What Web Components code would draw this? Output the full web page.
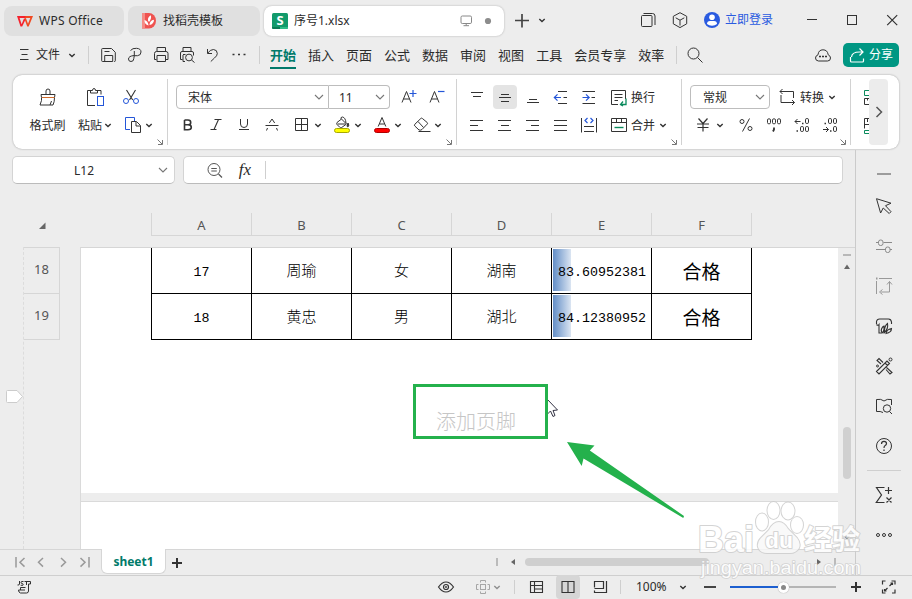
<!DOCTYPE html>
<html lang="zh-CN">
<head>
<meta charset="utf-8">
<title>序号1.xlsx - WPS Office</title>
<style>
  html, body {
    margin: 0;
    width: 912px;
    height: 599px;
    overflow: hidden;
    background: #ededed;
  }
  body {
    font: 12px/18px "Noto Sans", "Noto Sans CJK SC", sans-serif;
    color: #2b2b2b;
    --line: #d2d2d2;
    --accent: #007a6a;
    --cjk: "Noto Sans CJK SC", sans-serif;
  }
</style>
</head>
<body>
<wps-app></wps-app>

<script>
// 20x20 line icons, 1px = 1 unit
const ICONS = {
  chevron: '<path d="M7.300 9l2.700 2.500L12.700 9" stroke-width="1.400"/>',
  chevronWide: '<path d="M6 8l4 4 4-4" stroke="#777" stroke-width="1.1"/>',
  launcher: '<path d="M7.5 7.5l4.500 4.500M12.500 8v4.500H8" stroke="#777"/>',
  wps: '<path d="M2 5h9v2H4.6l2 6.3L9 7.5h2L7.2 15.6H5.5z" fill="#f5222d" stroke="none"/><path d="M10.500 5H18l-4.300 10.600h-1.500L9.700 8.600l1-2 2.300 6.200L15.300 7H10z" fill="#f04a22" stroke="none"/>',
  daoke: '<path d="M3 2h7a7 7.700 0 0 1 0 15.400H3z" fill="#ef5350" stroke="none"/><path d="M3 2h3v15.400H3z" fill="#f58b84" stroke="none"/><path d="M9.600 14.500C5.800 13.500 5.500 11 5.500 9c2.300.5 3.800 2.500 4.100 5.500zM9 9.500C8.700 7 9.800 5.500 11.800 4.200c.7 2.300.2 4.200-1.800 6.800zM10.500 14c0-3 1.500-4.800 4.500-5.200 0 3-1.700 4.900-4.500 5.200z" fill="#fff" stroke="none"/>',
  sheetLogo: '<rect x="2" y="2" width="16" height="16" rx="1.500" fill="#129a6b" stroke="none"/><path d="M2 16h8v2H3.500Q2 18 2 16.500z" fill="#0a7b55" stroke="none"/><path d="M10 16h8v.5q0 1.500-1.500 1.500H10z" fill="#2fbd86" stroke="none"/>',
  monitor: '<rect x="5" y="5" width="10.500" height="7.500" rx="1.300" stroke="#888"/><path d="M10.200 12.500v2M7.500 14.700h5.500" stroke="#888"/>',
  dot: '<circle cx="10" cy="10" r="3.100" fill="#8c8c8c" stroke="none"/>',
  plusBig: '<path d="M3 10.500h14M10 4v13.500" stroke-width="1.700" stroke="#444"/>',
  windows: '<rect x="3.500" y="5.500" width="10.500" height="11" rx="1"/><path d="M5.500 3.500h9q2.500 0 2.500 2.500v9"/>',
  cube: '<path d="M10 2.700l6.700 3.600v7.500L10 17.600l-6.700-3.800V6.300zM5.700 7.800L10 10.200l4.300-2.400M10 10.200v5.300"/>',
  avatar: '<circle cx="10" cy="10" r="8" fill="#2a5be0" stroke="none"/><circle cx="10" cy="7.300" r="2.800" fill="#fff" stroke="none"/><path d="M5 14q0-3 3-3h4q3 0 3 3-2 1.800-5 1.800T5 14z" fill="#fff" stroke="none"/>',
  winMin: '<path d="M5 9.500h10"/>',
  winMax: '<rect x="5.500" y="5.500" width="9" height="9"/>',
  winClose: '<path d="M5.200 5.200l10 10M15.200 5.200l-10 10" stroke-width="1.200"/>',
  burger: '<path d="M6 4.500h8.500M7.500 9.500h6M6 14.500h8.500"/>',
  save: '<path d="M6 16.500H3.500q-.8 0-.8-.8V4.300q0-.8.8-.8h9l3.800 3.800v8.400q0 .8-.8.8H15M5.700 16.500v-6h8v6zM5.500 6.500h5"/>',
  brush: '<path d="M5.500 5.500q2-2.500 6-2.200 4.500.3 4.500 3.700t-3.500 3.700h-3.500M9.300 6v4.500M9.300 10.500Q3.500 11 3.500 14q0 2.500 2.500 2.500 2.800 0 2.800-3z"/>',
  print: '<path d="M6 6.500v-4h8.500v4M5.500 14.500H3.500V8.500q0-2 2-2h9.500q2 0 2 2v6h-2M6 10.500h8.500v6H6z"/>',
  preview: '<path d="M6 6.500v-4h8v4M5.500 14.500h-2V8q0-1.500 1.500-1.500h10q1.500 0 1.500 1.500v2.500M6 9.500h2.500M6 10v6.500h2"/><circle cx="12" cy="12.500" r="3.400"/><path d="M14.500 15l3 2.500"/>',
  undo: '<path d="M4.500 4v4.500H9M4.700 8.200Q7 4.500 10.500 4.500q3.800.3 3.800 4 0 2.300-3 4.700L7.800 16.500"/>',
  more: '<path d="M3.500 9.500h2M9 9.500h2M14.500 9.500h2" stroke-width="1.600"/>',
  search: '<circle cx="8.500" cy="8.500" r="5.500"/><path d="M12.500 12.500l5 5"/>',
  cloud: '<path d="M5.500 16q-3-.2-3-3 0-2.300 2.500-3.200.5-5 5-5t5.200 5q2.300 1 2.300 3.200 0 3-3 3z"/><path d="M6 11.500h2M9 11.500h2M12 11.500h2" stroke-width="1.600"/>',
  share: '<path d="M3.500 12v4q0 1 1 1h11q1 0 1-1v-2.500M4.500 12q.5-5 8-5h3M12.500 3.500L16 7l-3.500 3.500" stroke="#fff" stroke-width="1.200"/>',
  painter: '<path d="M8 7.500V4Q8 2 10 2T12 4v3.500M3.500 10.500L3 7.500h14l-.5 3M3.500 10.500v3l-1.500 4.500h13q1.500-3 1.500-7.500M12 18l1.500-4"/><path d="M4 10.500h12.500" stroke="#d06a2a"/>',
  paste: '<path d="M6 3.500H2.500v15H10M12 3.500h4v4"/><path d="M5.500 6V3.500h2q0-2 1.500-2t1.500 2h2V6z"/><rect x="12.500" y="9.500" width="6" height="9" stroke="#2456d8"/>',
  cut: '<path d="M5.500 3l6.200 10M14.500 3L8.500 13" stroke-width="1.100"/><circle cx="5" cy="14" r="2.500" stroke="#2456d8"/><circle cx="15" cy="14" r="2.500" stroke="#2456d8"/>',
  copy: '<path d="M7 14.500H2.500v-12h9v3.500" stroke="#2456d8"/><path d="M8.500 6.500h5l4 4v7h-9zM13 7v4h4"/>',
  fontUp: '<path d="M3 15.500l4.500-11 4.500 11M4.500 12h6"/><path d="M10.500 6.500h7M14 3v7" stroke="#2456d8" stroke-width="1.200"/>',
  fontDown: '<path d="M3 15.500l4.500-11 4.500 11M4.500 12h6"/><path d="M11 4.500h6.500" stroke="#2456d8" stroke-width="1.200"/>',
  bold: '<path d="M6.500 5h3.500q2.700 0 2.700 2.400T10 9.800H6.500M10 9.800q3.300 0 3.300 2.500T10 14.800H6.500V5" stroke-width="1.600"/>',
  italic: '<path d="M8.500 4.500h7M4.500 14.500h6M12.500 4.500l-4.500 10" stroke-width="1.100"/>',
  underline: '<path d="M6.500 4v5q0 3.500 3.500 3.500t3.500-3.500V4M5 14.500h10"/>',
  strike: '<path d="M3.500 10.500h13M7.300 8l2.700-4 2.700 4M5.500 13l-1 2.500M14.500 13l1 2.500"/>',
  borders: '<path d="M3.500 3.500h12v12h-12zM9.500 3.500v12M3.500 9.500h12"/>',
  fill: '<path d="M5 7.500l4.500-3.500 5 5L9.700 12.500q-1 .7-2-.3L5 9.500q-.7-1 0-2zM9 4q-.5-2 1.500-2 3 .5 3.500 6M5.500 9h8"/><path d="M16 8q1.500 2.500.3 3.500t-1.200-1z" fill="#333"/><rect x="2.500" y="13.500" width="15" height="4" rx="2" fill="#ff0" stroke="#a8a800"/>',
  fontColor: '<path d="M6.200 11.500L10 2.500l3.800 9M7.500 9h5"/><rect x="2.500" y="13.500" width="15" height="4" rx="2" fill="#f00" stroke="#b00000"/>',
  eraser: '<path d="M2.800 9.300l6-5.800q.8-.8 1.600 0l4.800 4q.8.8 0 1.600l-5.200 5.400q-1 1-3 .5L2.800 11q-.8-.8 0-1.700zM6 6.500l5.500 6M6.500 16.500h12"/>',
  vTop: '<path d="M4 5.500h12M6 9.500h8"/>',
  vMid: '<path d="M6 7.500h8M4 10.500h12M6 14.500h8"/>',
  vBottom: '<path d="M6 12.500h8M4 15.500h12"/>',
  outdent: '<path d="M7 4.500h9M12.500 10.500H16M7 16.500h9"/><path d="M10 10.500H3.500M6.500 7.300L3.300 10.500l3.200 3.200" stroke="#2456d8" stroke-width="1.200"/>',
  indent: '<path d="M3.500 4.500H16M12.500 10.500H16M3.500 16.500H16"/><path d="M3.500 10.500H10M7 7.300l3.200 3.200L7 13.700" stroke="#2456d8" stroke-width="1.200"/>',
  wrap: '<path d="M9 17.500H2.500v-14h14V12M5.500 7.500h8M5.500 10.500h8M5.500 13.500H9"/><path d="M17 11.500v6h-5M14 14.500l-2.500 3 2.500 1.500" stroke="#0a8a5c" stroke-width="1.300"/>',
  hLeft: '<path d="M3 5.500h13M3 10.500h8M3 15.500h13"/>',
  hCenter: '<path d="M3 5.500h13M6 10.500h8M3 15.500h13"/>',
  hRight: '<path d="M3 5.500h13M8 10.500h8M3 15.500h13"/>',
  hJustify: '<path d="M3 5.500h13M3 10.500h13M3 15.500h13"/>',
  distribute: '<path d="M2.500 3v14.500M17.500 3v14.500M5 11.500h10M5 16.500h10"/><path d="M8.500 3L6 5.500 8.500 8M11.500 3L14 5.500 11.500 8" stroke="#2456d8" stroke-width="1.200"/>',
  merge: '<path d="M2.500 3.500h15v13h-15zM2.500 7.500h15M7.500 3.500v4M12.500 3.500v4"/><path d="M5.500 12.500h9" stroke="#0a8a5c" stroke-width="1.400"/>',
  convert: '<path d="M4.500 2L2 4.500 4.500 7M2 4.500h13.500V11M3 8v7.500h13.500M14 13l2.500 2.500L14 18"/>',
  yen: '<path d="M5.500 3.500l4.500 5 4.500-5M4 9h12M4.500 12.500h11M10 9v7.500" stroke-width="1.200"/>',
  percent: '<circle cx="6" cy="6.500" r="2"/><circle cx="14" cy="13.500" r="2"/><path d="M13.500 3.500l-7 13"/>',
  thousands: '<rect x="3.500" y="3.800" width="3" height="5" rx="1.300"/><rect x="8.500" y="3.800" width="3" height="5" rx="1.300"/><rect x="13.500" y="3.800" width="3" height="5" rx="1.300"/><path d="M10 12.500v2l-1 2" stroke-width="1.800"/>',
  decInc: '<path d="M8.500 6.500H3M5.500 4L3 6.500 5.500 9"/><path d="M10 8.500h1.500M4.500 16H6" stroke-width="1.600"/><rect x="13.500" y="3.500" width="3" height="5" rx="1.300"/><rect x="8.500" y="11.500" width="3" height="5" rx="1.300"/><rect x="13.500" y="11.500" width="3" height="5" rx="1.300"/>',
  decDec: '<path d="M3 14.500h5.500M6 12l2.500 2.500L6 17"/><path d="M4.500 8.500H6M10 16h1.500" stroke-width="1.600"/><rect x="8.500" y="3.500" width="3" height="5" rx="1.300"/><rect x="13.500" y="3.500" width="3" height="5" rx="1.300"/><rect x="13.500" y="11.500" width="3" height="5" rx="1.300"/>',
  cutoffTop: '<path d="M20 3.500h-4.500v5H20" stroke="#0a8a5c"/><path d="M20 11.500h-4.500v6H20M18.500 11.500v2"/>',
  cutoffBottom: '<path d="M20 3.500h-4.500v10M20 9.500h-4M18.500 4v3"/><path d="M20 15.500h-4.500v3H20" stroke="#0a8a5c"/>',
  next: '<path d="M7.500 5l5 5-5 5" stroke="#555" stroke-width="1.500"/>',
  zoomOut: '<circle cx="9" cy="9.500" r="6" stroke="#555"/><path d="M6.300 8.500h5.500M6.300 11h5.500M13.500 14l3.500 3.500" stroke="#555" stroke-width="1.200"/>',
  corner: '<path d="M13.500 7.500v6.500H7z" fill="#666" stroke="none"/>',
  railMinus: '<path d="M3 10h14" stroke="#888" stroke-width="1.600"/>',
  pointer: '<path d="M2.500 2.700l14.500 4.500-5.500 2.500 5.500 6-1.800 1.800-6-5.500-2.600 5z"/>',
  sliders: '<g stroke="#8a8a8a"><path d="M2 6.500h2.500M9.500 6.500H18M2 13.500h9M16 13.500h2"/><rect x="4.500" y="4" width="4.500" height="5.500" rx="2"/><rect x="11.500" y="11" width="4.500" height="5.500" rx="2"/></g>',
  crop: '<g stroke="#999"><path d="M5 2.500h13M2.500 5v13M15.500 5.500v10.500H7M8.500 13.500L5.500 16l3 2.500M13 8.500l2.500-3L18 8.500"/><path d="M2 2.500h1.500" stroke-width="2"/></g>',
  leaf: '<path d="M2.500 8V5.500Q3 3 5.500 3h9q2.500 0 3 3v2M2.500 8.500q1.500 1.500 2.500 0v8.500h3M9 17q-2.500-1.500-1.500-4 1-2.500 2.500-3 .5 3.500-1 7zM10.500 16.500q-.5-6 3-9 1 5-3 9zM12 17.500q.5-4 5.500-5 0 4-5.500 5z" stroke-width="1.100"/>',
  tools: '<path d="M2.500 15.500L13 5l2.500 2.500L5 18zM12.500 11.500l5.500 5-2 1.500-4-4.500M7 8L3 4.500 5 2.500 9 6.500M11 7l2.500 2.500" stroke-width="1.100"/><circle cx="16.500" cy="3.500" r="1.500"/><circle cx="3.500" cy="10" r="1"/>',
  book: '<path d="M10 5q-3-2.500-7.500-1.500v12q4-.5 6.500 1M10 5q3-2.500 7.500-1.500V9"/><circle cx="13" cy="12.500" r="3.700"/><path d="M15.500 15.500l2.500 2.500"/>',
  help: '<circle cx="10" cy="10" r="7.500"/><path d="M7.500 8q0-2.700 2.500-2.700t2.500 2.200q0 1.300-1.300 2T10 12M10 13.500V15" stroke-width="1.200"/>',
  sigma: '<path d="M10.500 2.500h-8l5 7.500-5.200 7.500h8.200M14.500 2v7M11 5.500h7M12.500 12.500l5 5M17.500 12.500l-5 5" stroke-width="1.200"/>',
  ellipsis: '<circle cx="4" cy="10" r="1.500"/><circle cx="10" cy="10" r="1.500"/><circle cx="16" cy="10" r="1.500"/>',
  first: '<path d="M6 5v10.500M14.500 6l-4.500 4.300 4.500 4.300" stroke="#999" stroke-width="1.500"/>',
  prev: '<path d="M12 6l-4.500 4.300 4.500 4.300" stroke="#999" stroke-width="1.500"/>',
  following: '<path d="M8 6l4.500 4.300L8 14.600" stroke="#999" stroke-width="1.500"/>',
  last: '<path d="M14 5v10.500M5.500 6l4.500 4.300-4.500 4.300" stroke="#999" stroke-width="1.500"/>',
  plus: '<path d="M5 10h10M10 5v10" stroke-width="2"/>',
  minus: '<path d="M4 10h12" stroke-width="1.800"/>',
  bar: '<path d="M10 6v8" stroke="#aaa" stroke-width="1.500"/>',
  left: '<path d="M12 7v6L8 10z" fill="#666" stroke="none"/>',
  right: '<path d="M8 7v6l4-3z" fill="#666" stroke="none"/>',
  up: '<path d="M7 13h6l-3-4.500z" fill="#666" stroke="none"/>',
  down: '<path d="M7 8h6l-3 4z" fill="#777" stroke="none"/>',
  scrollDash: '<path d="M6 10h8" stroke="#aaa" stroke-width="1.600"/>',
  script: '<path d="M5.500 4v3q0 1.300-2 1M9.500 4.500H8q-1 0-1 1t1 1 1.200 1-1.200.8H6.700M10.500 4.500h6v2.500h-2M14.500 7v7q0 2-2 2H6.500q-2-.5-2-3h6.500M12.500 5v3M6.500 13v-2.500h5"/>',
  eye: '<path d="M3.500 10Q7 5 11 5t7.500 5q-3.500 5-7.500 5T3.500 10z" stroke-width="1.200"/><circle cx="11" cy="10" r="2.500" stroke-width="1.200"/><circle cx="11" cy="10" r=".6"/>',
  cross: '<g stroke="#a5a5a5"><rect x="7.500" y="7.500" width="5" height="5"/><path d="M7.500 5.500v-2h5v2M7.500 14.500v2h5v-2M5.500 7.500h-2v5h2M14.500 7.500h2v5h-2"/></g>',
  viewNormal: '<path d="M4.500 4.500h12v11h-12zM4.500 8.500h12M8.500 4.500v11M8.500 12h8" stroke-width="1.100"/>',
  viewPage: '<path d="M4 4.500h12v11H4zM10 4.500v11" stroke-width="1.100"/>',
  viewBreak: '<path d="M4.500 10.500v-6h9v7h-9M16.500 4v11.500H4.500V13.500" stroke-width="1.200"/>',
  fullscreen: '<path d="M3.500 7.500V4h3M12.500 4H16v3.500M16 12.500V16h-3M6.500 16H3.500V12.500M10.500 9l3-3M11.500 6h2v2M8.500 11l-3 3M5.500 12v2h2" stroke-width="1.200"/>',
};

class UiIcon extends HTMLElement {
  constructor() {
    super();
    this.attachShadow({ mode: "open" });
  }

  connectedCallback() {
    const width = this.getAttribute("w") || 20;
    this.shadowRoot.innerHTML = `
      <style>
        :host {
          display: flex;
          justify-content: center;
          align-items: center;
          flex: none;
          width: ${width}px;
          color: #333;
        }
        svg { flex: none; display: block; fill: none; stroke: currentColor; }
      </style>
      <svg width="20" height="20" viewBox="0 0 20 20">${ICONS[this.getAttribute("name")]}</svg>
    `;
  }
}

class UiDivider extends HTMLElement {
  constructor() {
    super();
    this.attachShadow({ mode: "open" }).innerHTML = `
      <style>
        :host { display: block; flex: none; width: 1px; height: 18px; background: #cfcfcf; }
      </style>
    `;
  }
}

class FileTab extends HTMLElement {
  constructor() {
    super();
    this.attachShadow({ mode: "open" }).innerHTML = `
      <style>
        :host {
          display: flex;
          align-items: center;
          box-sizing: border-box;
          flex: none;
          height: 30px;
          padding-left: 11px;
          border-radius: 8px;
          background: #e0e0e0;
        }
        :host([active]) {
          background: #fff;
          box-shadow: 0 0 2px #aaa;
          padding-left: 6px;
        }
        span { margin-left: 4px; flex: 1; white-space: nowrap; letter-spacing: var(--tab-spacing, 0); }
      </style>
      <slot name="icon"></slot><span><slot></slot></span><slot name="end"></slot>
    `;
  }
}

class TitleBar extends HTMLElement {
  constructor() {
    super();
    this.attachShadow({ mode: "open" }).innerHTML = `
      <style>
        :host { display: flex; align-items: center; height: 40px; }
        .tabs { display: flex; gap: 4px; padding: 2px 0 0 4px; }
        .sheet-logo { display: grid; place-items: center; }
        .sheet-logo > * { grid-area: 1 / 1; }
        .sheet-logo b { color: #fff; font: bold 13px/16px "Noto Sans", sans-serif; z-index: 1; margin-top: -2px; }
        .login { color: #2a5be0; margin: 0 19px 0 3px; }
        .fill { flex: 1; }
      </style>
      <div class="tabs">
        <file-tab style="width:120px;--tab-spacing:.27px"><ui-icon slot="icon" name="wps"></ui-icon>WPS Office</file-tab>
        <file-tab style="width:132px"><ui-icon slot="icon" name="daoke"></ui-icon>找稻壳模板</file-tab>
        <file-tab active style="width:240px">
          <div class="sheet-logo" slot="icon"><ui-icon name="sheetLogo"></ui-icon><b>S</b></div>序号1.xlsx
          <ui-icon slot="end" name="monitor" w="22"></ui-icon>
          <ui-icon slot="end" name="dot" w="22" style="margin-right:5px"></ui-icon>
        </file-tab>
      </div>
      <ui-icon name="plusBig" style="margin-left:8px"></ui-icon>
      <ui-icon name="chevron"></ui-icon>
      <div class="fill"></div>
      <ui-icon name="windows" w="32"></ui-icon>
      <ui-icon name="cube" w="32"></ui-icon>
      <ui-icon name="avatar" style="margin-left:6px"></ui-icon>
      <span class="login">立即登录</span>
      <ui-icon name="winMin" w="40"></ui-icon>
      <ui-icon name="winMax" w="40"></ui-icon>
      <ui-icon name="winClose" w="40"></ui-icon>
    `;
  }
}

class MenuBar extends HTMLElement {
  constructor() {
    super();
    const menus = ["开始", "插入", "页面", "公式", "数据", "审阅", "视图", "工具", "会员专享", "效率"];
    const tools = ["save", "brush", "print", "preview", "undo", "more"];
    this.attachShadow({ mode: "open" }).innerHTML = `
      <style>
        :host { display: flex; align-items: center; height: 30px; padding: 0 13px 0 14px; }
        .file { margin-left: 2px; }
        .tools { display: flex; margin: 0 7px; }
        nav { display: flex; gap: 12px; margin: 0 12px 0 10px; font: 13px/26px var(--cjk); height: 28px; white-space: nowrap; }
        nav .on { color: var(--accent); font-weight: bold; border-bottom: 2px solid var(--accent); height: 25px; padding-top: 1px; }
        nav span { padding-top: 1px; }
        .fill { flex: 1; }
        .share {
          display: flex;
          align-items: center;
          box-sizing: border-box;
          width: 56px;
          height: 24px;
          padding-left: 4px;
          gap: 2px;
          margin-left: 10px;
          border-radius: 5px;
          background: #009783;
          color: #fff;
        }
      </style>
      <ui-icon name="burger"></ui-icon>
      <span class="file">文件</span>
      <ui-icon name="chevron" w="24"></ui-icon>
      <ui-divider style="margin-left:4px"></ui-divider>
      <div class="tools">${tools.map((t) => `<ui-icon name="${t}" w="26"></ui-icon>`).join("")}</div>
      <ui-divider></ui-divider>
      <nav>${menus.map((m, i) => `<span class="${i ? "" : "on"}">${m}</span>`).join("")}</nav>
      <ui-divider></ui-divider>
      <ui-icon name="search" style="margin-left:8px"></ui-icon>
      <div class="fill"></div>
      <ui-icon name="cloud"></ui-icon>
      <div class="share"><ui-icon name="share"></ui-icon>分享</div>
    `;
  }
}

// Two rows of controls with the dialog launcher under them
class RibbonGroup extends HTMLElement {
  constructor() {
    super();
    this.attachShadow({ mode: "open" }).innerHTML = `
      <style>
        :host {
          display: grid;
          grid-template-rows: 28px 28px 6px;
          flex: none;
          box-sizing: border-box;
          padding-top: 4px;
          height: 66px;
          border-right: 1px solid var(--line);
        }
        .row { display: flex; align-items: center; padding-left: var(--pad, 6px); }
        .launcher { display: flex; justify-content: flex-end; align-items: center; height: 6px; }
        .launcher ui-icon { margin-right: -3px; height: 6px; }
      </style>
      <div class="row"><slot name="top"></slot></div>
      <div class="row"><slot name="bottom"></slot></div>
      <div class="launcher"><ui-icon name="launcher"></ui-icon></div>
    `;
  }
}

class ComboBox extends HTMLElement {
  constructor() {
    super();
    this.attachShadow({ mode: "open" }).innerHTML = `
      <style>
        :host {
          display: flex;
          align-items: center;
          justify-content: space-between;
          flex: none;
          box-sizing: border-box;
          height: 24px;
          padding-left: 11px;
          border: 1px solid #bdbdbd;
          border-radius: 4px;
          background: #fff;
        }
        :host([joined="left"]) { border-radius: 4px 0 0 4px; }
        :host([joined="right"]) { border-radius: 0 4px 4px 0; border-left: 0; padding-left: 10px; }
        span { padding-top: 1px; }
      </style>
      <span><slot></slot></span><ui-icon name="chevronWide" w="19"></ui-icon>
    `;
  }
}

class RibbonBar extends HTMLElement {
  constructor() {
    super();
    const cells = (names) => names.map((n) => `<ui-icon name="${n}" w="28"></ui-icon>`).join("");
    this.attachShadow({ mode: "open" }).innerHTML = `
      <style>
        :host {
          display: flex;
          box-sizing: border-box;
          height: 74px;
          margin: 5px 13px 1px;
          padding-top: 4px;
          border-radius: 9px;
          background: #fff;
          box-shadow: 0 0 2px #999;
        }
        [slot] { display: flex; align-items: center; }
        .label { text-align: center; white-space: nowrap; padding-top: 1px; }
        .pair { display: flex; align-items: center; }
        .pressed { background: #e4e4e4; border-radius: 4px; width: 24px; height: 24px; margin: 0 2px; display: flex; justify-content: center; }
        .cutoff { display: grid; grid-template: 28px 28px / 20px; padding-top: 4px; width: 18px; justify-content: end; overflow: hidden; }
        .scroll { display: flex; justify-content: center; align-items: center; width: 19px; height: 66px; border-radius: 4px; background: #ececec; z-index: 1; }
      </style>
      <ribbon-group style="width:155px;--pad:10px">
        <div slot="top"><ui-icon name="painter" w="50"></ui-icon><ui-icon name="paste" w="44"></ui-icon><ui-icon name="cut" w="28"></ui-icon></div>
        <div slot="bottom">
          <span class="label" style="width:49px">格式刷</span>
          <span class="pair" style="width:46px;padding-left:6px;box-sizing:border-box"><span class="label">粘贴</span><ui-icon name="chevron" w="12"></ui-icon></span>
          <ui-icon name="copy" w="30"></ui-icon><ui-icon name="chevron" w="2"></ui-icon>
        </div>
      </ribbon-group>
      <ribbon-group style="width:289px">
        <div slot="top" style="padding-left:2px">
          <combo-box joined="left" style="width:153px">宋体</combo-box>
          <combo-box joined="right" style="width:61px">11</combo-box>
          <ui-icon name="fontUp" w="28" style="margin-left:5px"></ui-icon><ui-icon name="fontDown" w="28"></ui-icon>
        </div>
        <div slot="bottom">
          ${cells(["bold", "italic", "underline", "strike"])}
          <ui-icon name="borders" w="32"></ui-icon><ui-icon name="chevron" w="0"></ui-icon>
          <ui-icon name="fill" w="32" style="margin-left:8px"></ui-icon><ui-icon name="chevron" w="0"></ui-icon>
          <ui-icon name="fontColor" w="32" style="margin-left:8px"></ui-icon><ui-icon name="chevron" w="0"></ui-icon>
          <ui-icon name="eraser" w="32" style="margin-left:8px"></ui-icon><ui-icon name="chevron" w="0"></ui-icon>
        </div>
      </ribbon-group>
      <ribbon-group style="width:225px">
        <div slot="top">
          ${cells(["vTop"])}<div class="pressed"><ui-icon name="vMid"></ui-icon></div>${cells(["vBottom", "outdent", "indent"])}
          <ui-icon name="wrap" style="margin:0 2px 0 6px"></ui-icon><span class="label">换行</span>
        </div>
        <div slot="bottom">
          ${cells(["hLeft", "hCenter", "hRight", "hJustify", "distribute"])}
          <ui-icon name="merge" style="margin:0 2px 0 6px"></ui-icon><span class="label">合并</span><ui-icon name="chevron" w="16"></ui-icon>
        </div>
      </ribbon-group>
      <ribbon-group style="width:169px">
        <div slot="top" style="padding-left:2px">
          <combo-box style="width:80px;padding-left:12px">常规</combo-box>
          <ui-icon name="convert" style="margin:0 2px 0 8px"></ui-icon><span class="label">转换</span><ui-icon name="chevron" w="16"></ui-icon>
        </div>
        <div slot="bottom">
          <ui-icon name="yen" w="30"></ui-icon><ui-icon name="chevron" w="4"></ui-icon>
          <div style="display:flex;margin-left:10px">${cells(["percent", "thousands", "decInc", "decDec"])}</div>
        </div>
      </ribbon-group>
      <div class="cutoff"><ui-icon name="cutoffTop"></ui-icon><ui-icon name="cutoffBottom"></ui-icon></div>
      <div class="scroll"><ui-icon name="next"></ui-icon></div>
    `;
  }
}

class FormulaBar extends HTMLElement {
  constructor() {
    super();
    this.attachShadow({ mode: "open" }).innerHTML = `
      <style>
        :host { display: flex; gap: 8px; padding: 6px 0 0 12px; }
        div {
          display: flex;
          align-items: center;
          box-sizing: border-box;
          height: 28px;
          border: 1px solid #d4d4d4;
          border-bottom-color: #bbb;
          border-radius: 5px;
          background: #fff;
        }
        .name { width: 163px; }
        .name span { flex: 1; text-align: center; padding: 1px 0 0 3px; font-size: 12px; }
        .input { width: 660px; padding-left: 21px; }
        i { font: italic 17px/20px "Liberation Serif", serif; width: 40px; text-align: center; }
      </style>
      <div class="name"><span>L12</span><ui-icon name="chevronWide" w="22"></ui-icon></div>
      <div class="input"><ui-icon name="zoomOut"></ui-icon><i>fx</i><ui-divider></ui-divider></div>
    `;
  }
}

class SheetCell extends HTMLElement {
  constructor() {
    super();
    this.attachShadow({ mode: "open" }).innerHTML = `
      <style>
        :host {
          display: flex;
          justify-content: center;
          align-items: center;
          box-sizing: border-box;
          width: 100px;
          height: 46px;
          padding-top: 4px;
          border-left: 1px solid #000;
          border-bottom: 1px solid #000;
          font: 300 15px/20px "Liberation Mono", var(--cjk);
          color: #000;
        }
        :host(.num) { font-size: 13.33px; padding-top: 5px; }
        :host(.bar) { padding-left: 1px; background: linear-gradient(90deg, #638ec6, #dbe5f2) 1px 1px / 18px 42px no-repeat; }
        :host(.big) { width: 101px; border-right: 1px solid #000; font-size: 19px; font-weight: 400; padding-top: 6px; }
      </style>
      <slot></slot>
    `;
  }
}

class SheetView extends HTMLElement {
  constructor() {
    super();
    const rows = [
      ["17", "周瑜", "女", "湖南", "83.60952381", "合格"],
      ["18", "黄忠", "男", "湖北", "84.12380952", "合格"],
    ];
    const kinds = ["num", "", "", "", "num bar", "big"];
    this.attachShadow({ mode: "open" }).innerHTML = `
      <style>
        :host { display: flex; flex-direction: column; height: 365px; }
        .columns { display: flex; height: 23px; margin-top: 29px; padding-left: 32px; color: #555; font-size: 13px; line-height: 24px; }
        .columns ui-icon { margin-right: 99px; }
        .columns span { box-sizing: border-box; width: 100px; text-align: center; border-left: 1px solid #d6d6d6; border-bottom: 1px solid #d6d6d6; }
        .columns span:last-child { width: 101px; border-right: 1px solid #d6d6d6; }
        .body { display: flex; flex: 1; margin-top: 11px; min-height: 0; }
        .gutter { width: 23px; }
        .gutter svg { display: block; margin: 143px 0 0 6px; }
        .rows { box-sizing: border-box; width: 57px; border-left: 1px dashed #dcdcdc; }
        .rows div { box-sizing: border-box; width: 36px; height: 46px; border: 1px solid #d6d6d6; border-width: 1px 1px 0 0; color: #555; font-size: 13px; line-height: 43px; text-align: center; }
        .rows div:last-child { height: 47px; border-bottom-width: 1px; }
        .pages { width: 758px; box-sizing: border-box; display: flex; flex-direction: column; border-left: 1px solid #dadada; border-top: 1px solid #d6d6d6; }
        .page { background: #fff; }
        .page.first { height: 245px; padding-left: 70px; box-sizing: border-box; }
        .page.next { flex: 1; margin-top: 8px; border-top: 1px solid #dadada; }
        .table { display: grid; grid-template-columns: repeat(6, 100px); }
        .footer { margin: 67px 0 0 285px; font: 300 20px/28px var(--cjk); color: #c6c6c6; }
        .scroll { box-sizing: border-box; width: 17px; border-top: 1px solid #d6d6d6; display: flex; flex-direction: column; align-items: center; }
        .thumb { width: 8px; height: 52px; border-radius: 4px; background: #d0d0d0; }
        .scroll ui-icon { height: 14px; }
      </style>
      <div class="columns"><ui-icon name="corner"></ui-icon>${[..."ABCDEF"].map((c) => `<span>${c}</span>`).join("")}</div>
      <div class="body">
        <div class="gutter">
          <svg width="17" height="14"><path d="M.5 1.500q0-1 1-1h9.500l5.500 6-5.500 6H1.500q-1 0-1-1z" fill="#fff" stroke="#ccc"/></svg>
        </div>
        <div class="rows"><div>18</div><div>19</div></div>
        <div class="pages">
          <div class="page first">
            <div class="table">${rows.map((r) => r.map((v, i) => `<sheet-cell class="${kinds[i]}">${v}</sheet-cell>`).join("")).join("")}</div>
            <div class="footer">添加页脚</div>
          </div>
          <div class="page next"></div>
        </div>
        <div class="scroll">
          <ui-icon name="scrollDash"></ui-icon>
          <ui-icon name="up" style="margin-top:-3px"></ui-icon>
          <div class="thumb" style="margin-top:154px"></div>
          <ui-icon name="down" style="margin-top:52px"></ui-icon>
        </div>
      </div>
    `;
  }
}

class SheetTabs extends HTMLElement {
  constructor() {
    super();
    this.attachShadow({ mode: "open" }).innerHTML = `
      <style>
        :host { display: flex; box-sizing: border-box; height: 26px; border-top: 1px solid #d6d6d6; padding-left: 9px; }
        ui-icon { height: 24px; }
        .tab {
          box-sizing: border-box;
          width: 65px;
          height: 25px;
          margin: -1px 1px 0 6px;
          border: 1px solid #d6d6d6;
          border-top: 0;
          border-radius: 0 0 6px 6px;
          background: #fff;
          color: var(--accent);
          font-weight: bold;
          font-size: 12px;
          line-height: 25px;
          text-align: center;
        }
        .fill { flex: 1; }
        .thumb { width: 184px; height: 8px; margin-top: 8px; border-radius: 4px; background: #cfcfcf; }
      </style>
      <ui-icon name="first" w="21"></ui-icon>
      <ui-icon name="prev" w="22"></ui-icon>
      <ui-icon name="following" w="22"></ui-icon>
      <ui-icon name="last" w="21"></ui-icon>
      <div class="tab">sheet1</div>
      <ui-icon name="plus" style="margin-top:1px"></ui-icon>
      <div class="fill"></div>
      <ui-icon name="bar" w="16"></ui-icon>
      <ui-icon name="left" w="16"></ui-icon>
      <div class="thumb" style="margin-left:4px"></div>
      <ui-icon name="right" w="16" style="margin-left:102px"></ui-icon>
      <ui-icon name="bar" w="16" style="margin-right:12px"></ui-icon>
    `;
  }
}

class SideRail extends HTMLElement {
  constructor() {
    super();
    const icons = ["pointer", "sliders", "crop", "leaf", "tools", "book", "help"];
    this.attachShadow({ mode: "open" }).innerHTML = `
      <style>
        :host { display: flex; flex-direction: column; align-items: center; box-sizing: border-box; width: 57px; padding-top: 12px; border-left: 1px solid #cbcbcb; }
        ui-icon { height: 40px; }
        hr { width: 34px; height: 1px; margin: 4px 0; border: 0; background: #cfcfcf; }
      </style>
      <ui-icon name="railMinus" style="height:24px"></ui-icon>
      ${icons.map((n) => `<ui-icon name="${n}"></ui-icon>`).join("")}
      <hr>
      <ui-icon name="sigma"></ui-icon>
      <ui-icon name="ellipsis"></ui-icon>
    `;
  }
}

class StatusBar extends HTMLElement {
  constructor() {
    super();
    this.attachShadow({ mode: "open" }).innerHTML = `
      <style>
        :host { display: flex; align-items: center; box-sizing: border-box; height: 24px; padding: 0 13px 1px 14px; border-top: 1px solid #cfcfcf; }
        .fill { flex: 1; }
        .on { display: flex; justify-content: center; width: 24px; height: 24px; align-items: center; border-radius: 4px; background: #d6d6d6; margin: 0 4px; }
        ui-divider { height: 14px; }
        .zoom { width: 33px; font-size: 12px; margin-left: 15px; }
        .slider { display: flex; align-items: center; width: 106px; }
        .slider i { flex: 1; height: 2px; background: #b5b5b5; }
        .slider i:first-child { background: #1d5fd0; }
        .knob { box-sizing: border-box; width: 11px; height: 11px; border: 3px solid #fff; border-radius: 50%; background: #888; box-shadow: 0 0 1px #888; }
      </style>
      <ui-icon name="script"></ui-icon>
      <div class="fill"></div>
      <ui-icon name="eye"></ui-icon>
      <ui-icon name="cross" style="margin-left:18px"></ui-icon><ui-icon name="chevron" w="8" style="opacity:.5;margin-right:13px"></ui-icon>
      <ui-divider style="margin-right:5px"></ui-divider>
      <ui-icon name="viewNormal" w="32"></ui-icon>
      <div class="on"><ui-icon name="viewPage"></ui-icon></div>
      <ui-icon name="viewBreak" w="32"></ui-icon>
      <ui-divider style="margin-left:4px"></ui-divider>
      <span class="zoom">100%</span>
      <ui-icon name="chevron" w="28"></ui-icon>
      <ui-icon name="minus" w="26"></ui-icon>
      <div class="slider" style="margin-left:7px"><i></i><span class="knob"></span><i></i></div>
      <ui-icon name="plus" style="margin-left:10px"></ui-icon>
      <ui-icon name="fullscreen" style="margin-left:13px"></ui-icon>
    `;
  }
}

// Highlight frame, arrow, mouse pointer and watermark lie over the whole window
class NoteOverlay extends HTMLElement {
  constructor() {
    super();
    this.attachShadow({ mode: "open" }).innerHTML = `
      <style>
        :host { position: absolute; inset: 0; pointer-events: none; }
        svg { display: block; }
        .mark { fill: #fff; stroke: #cdcdcd; stroke-width: 2px; stroke-linejoin: round; paint-order: stroke; opacity: .85; }
        .mark .pad { fill: #f8f8f8; }
        text { font-family: "Liberation Sans", "Noto Sans CJK SC", sans-serif; }
      </style>
      <svg width="912" height="599" viewBox="0 0 912 599">
        <path d="M547.500 399.500v14.500l3-3 2.500 5.500 2-1-2-5 4.500-.500z" fill="#fff" stroke="#334"/>
        <rect x="414.500" y="385.500" width="132" height="52" fill="none" stroke="#24b14c" stroke-width="3"/>
        <path d="M567 442l27.500 3.500-4.700 5L684 516l-.700 2L583.500 458.500l-1.800 7.500z" fill="#24b14c"/>
        <g class="mark">
          <ellipse cx="762" cy="522" rx="6" ry="8.500"/>
          <ellipse cx="773.500" cy="510.500" rx="6" ry="8.500"/>
          <ellipse cx="788" cy="511" rx="6.500" ry="8.500"/>
          <ellipse cx="797" cy="525" rx="6" ry="8"/>
          <path class="pad" d="M779 522q5 0 9 7l9 9q4 5 2 10-3 5-9 5h-23q-7 0-9-6-1-5 3-9l8-8q4-8 10-8z"/>
          <text x="698" y="552" font-size="36" font-weight="bold" textLength="56" lengthAdjust="spacingAndGlyphs">Bai</text>
          <text x="765" y="548" font-size="22" font-weight="bold" textLength="28" lengthAdjust="spacingAndGlyphs">du</text>
          <text x="804" y="550" font-size="28" font-weight="bold" textLength="56" lengthAdjust="spacingAndGlyphs">经验</text>
          <text x="701" y="574" font-size="18" textLength="160" lengthAdjust="spacingAndGlyphs" style="stroke-width:1.500px">jingyan.baidu.com</text>
        </g>
      </svg>
    `;
  }
}

class WpsApp extends HTMLElement {
  constructor() {
    super();
    this.attachShadow({ mode: "open" }).innerHTML = `
      <style>
        :host { position: relative; display: flex; flex-direction: column; width: 912px; height: 599px; }
        .work { display: flex; height: 425px; }
        .main { width: 855px; display: flex; flex-direction: column; }
      </style>
      <title-bar></title-bar>
      <menu-bar></menu-bar>
      <ribbon-bar></ribbon-bar>
      <div class="work">
        <div class="main">
          <formula-bar></formula-bar>
          <sheet-view></sheet-view>
          <sheet-tabs></sheet-tabs>
        </div>
        <side-rail></side-rail>
      </div>
      <status-bar></status-bar>
      <note-overlay></note-overlay>
    `;
  }
}

customElements.define("ui-icon", UiIcon);
customElements.define("ui-divider", UiDivider);
customElements.define("file-tab", FileTab);
customElements.define("title-bar", TitleBar);
customElements.define("menu-bar", MenuBar);
customElements.define("ribbon-group", RibbonGroup);
customElements.define("combo-box", ComboBox);
customElements.define("ribbon-bar", RibbonBar);
customElements.define("formula-bar", FormulaBar);
customElements.define("sheet-cell", SheetCell);
customElements.define("sheet-view", SheetView);
customElements.define("sheet-tabs", SheetTabs);
customElements.define("side-rail", SideRail);
customElements.define("status-bar", StatusBar);
customElements.define("note-overlay", NoteOverlay);
customElements.define("wps-app", WpsApp);
</script>
</body>
</html>
